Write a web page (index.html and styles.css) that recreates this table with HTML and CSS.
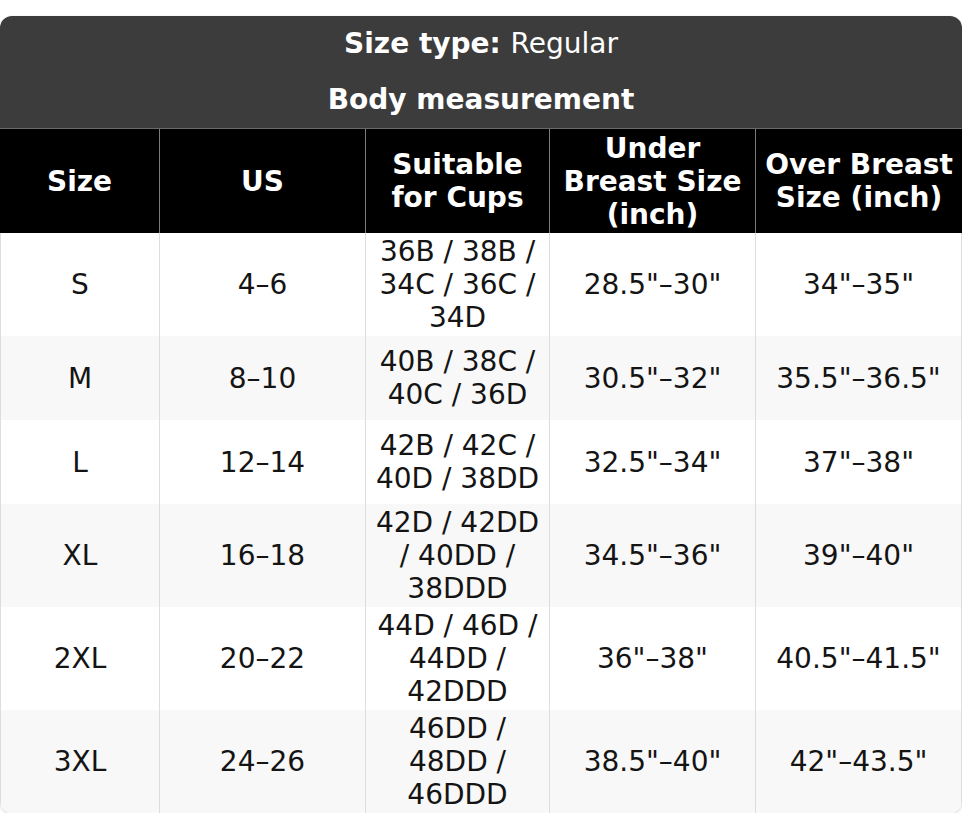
FILE: index.html
```html
<!DOCTYPE html>
<html lang="en">
<head>
<meta charset="utf-8">
<title>Size chart</title>
<link rel="stylesheet" href="styles.css">
</head>
<body>
<div class="chart">
  <table class="size-table">
    <colgroup>
      <col class="c1"><col class="c2"><col class="c3"><col class="c4"><col class="c5">
    </colgroup>
    <thead>
      <tr class="title-row first">
        <th colspan="5"><strong>Size type:</strong> <span class="regular">Regular</span></th>
      </tr>
      <tr class="title-row second">
        <th colspan="5">Body measurement</th>
      </tr>
      <tr class="head-row">
        <th>Size</th>
        <th>US</th>
        <th>Suitable for Cups</th>
        <th>Under Breast Size (inch)</th>
        <th>Over Breast Size (inch)</th>
      </tr>
    </thead>
    <tbody>
      <tr class="r3">
        <td>S</td><td>4–6</td><td>36B / 38B / 34C / 36C / 34D</td><td>28.5"–30"</td><td>34"–35"</td>
      </tr>
      <tr class="r2 alt">
        <td>M</td><td>8–10</td><td>40B / 38C / 40C / 36D</td><td>30.5"–32"</td><td>35.5"–36.5"</td>
      </tr>
      <tr class="r2">
        <td>L</td><td>12–14</td><td>42B / 42C / 40D / 38DD</td><td>32.5"–34"</td><td>37"–38"</td>
      </tr>
      <tr class="r3 alt">
        <td>XL</td><td>16–18</td><td>42D / 42DD / 40DD / 38DDD</td><td>34.5"–36"</td><td>39"–40"</td>
      </tr>
      <tr class="r3">
        <td>2XL</td><td>20–22</td><td>44D / 46D / 44DD / 42DDD</td><td>36"–38"</td><td>40.5"–41.5"</td>
      </tr>
      <tr class="r3 alt last">
        <td>3XL</td><td>24–26</td><td>46DD / 48DD / 46DDD</td><td>38.5"–40"</td><td>42"–43.5"</td>
      </tr>
    </tbody>
  </table>
</div>
</body>
</html>
```

FILE: styles.css
```css
html, body {
  margin: 0;
  padding: 0;
  background: #ffffff;
}

body {
  font-family: "DejaVu Sans", Verdana, sans-serif;
  font-size: 28px;
  color: #141414;
}

.chart {
  margin-top: 16px;
  width: 962px;
  border-radius: 12px;
  overflow: hidden;
  box-shadow: 0 1px 3px rgba(0, 0, 0, 0.18);
}

.size-table {
  width: 962px;
  table-layout: fixed;
  border-collapse: separate;
  border-spacing: 0;
}

.c1 { width: 159px; }
.c2 { width: 206px; }
.c3 { width: 184px; }
.c4 { width: 206px; }
.c5 { width: 207px; }

.size-table th,
.size-table td {
  padding: 2px 3px;
  text-align: center;
  vertical-align: middle;
  line-height: normal;
}

.title-row th {
  background: #3c3c3c;
  color: #ffffff;
  font-weight: bold;
}

.title-row.first { height: 55px; }
.title-row.second { height: 58px; }
.title-row.second th { border-bottom: 1px solid #6a6a6a; }

.title-row .regular { font-weight: normal; }

.head-row { height: 104px; }

.head-row th {
  background: #000000;
  color: #ffffff;
  font-weight: bold;
}

.head-row th + th { border-left: 1px solid #7a7a7a; }

.size-table td { background: #ffffff; }
.size-table td + td { border-left: 1px solid #dddddd; }
.size-table td:first-child { border-left: 1px solid #dddddd; }
.size-table td:last-child { border-right: 1px solid #dddddd; }

.alt td { background: #f8f8f8; }

.r3 { height: 103px; }
.r2 { height: 84px; }
```
